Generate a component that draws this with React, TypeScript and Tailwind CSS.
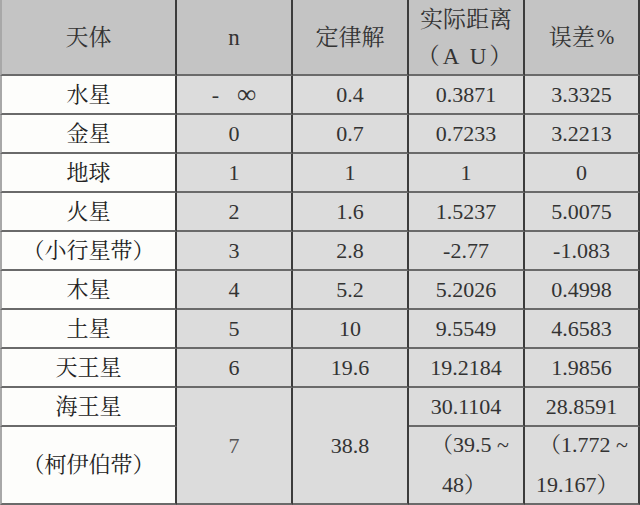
import React from 'react';

type Row = {
  name: string;
  n: React.ReactNode;
  law: string;
  actual: string;
  error: string;
};

const rows: Row[] = [
  {
    name: '水星',
    n: (
      <>
        -<span className="ml-[18px] text-[27px]">∞</span>
      </>
    ),
    law: '0.4',
    actual: '0.3871',
    error: '3.3325',
  },
  { name: '金星', n: '0', law: '0.7', actual: '0.7233', error: '3.2213' },
  { name: '地球', n: '1', law: '1', actual: '1', error: '0' },
  { name: '火星', n: '2', law: '1.6', actual: '1.5237', error: '5.0075' },
  { name: '（小行星带）', n: '3', law: '2.8', actual: '-2.77', error: '-1.083' },
  { name: '木星', n: '4', law: '5.2', actual: '5.2026', error: '0.4998' },
  { name: '土星', n: '5', law: '10', actual: '9.5549', error: '4.6583' },
  { name: '天王星', n: '6', law: '19.6', actual: '19.2184', error: '1.9856' },
];

const font = {
  fontFamily: '"Liberation Serif", "Noto Serif CJK SC", "Noto Sans CJK SC", serif',
};

// cellule de base : bordure droite foncée, bordure basse grise
const cell = 'flex items-center justify-center border-r-2 border-b-2 border-r-[#3c3c3c] border-b-[#6a6a6a]';
const nameCell = `${cell} bg-[#fdfdfb] border-l-2 border-l-[#a8a8a8] text-[#222]`;
const dataCell = `${cell} bg-[#dcdcdc] text-[#333]`;
const headCell = `${cell} bg-[#c4c4c4] text-[#333] text-[23px]`;

export default function App() {
  return (
    <div className="w-[640px] h-[505px] bg-white text-[22px] leading-none" style={font}>
      <div className="grid grid-cols-[177px_116px_116px_116px_115px] grid-rows-[76px_repeat(9,39px)_78px]">
        {/* En-tête */}
        <div className={`${headCell} border-l-2 border-l-[#a8a8a8]`}>天体</div>
        <div className={headCell}>n</div>
        <div className={headCell}>定律解</div>
        <div className={`${headCell} flex-col`}>
          <span className="leading-[37px] mt-[2px]">实际距离</span>
          <span className="leading-[37px] tracking-[3px]">（A U）</span>
        </div>
        <div className={headCell}>
          误差<span className="ml-[2px] text-[21px]">%</span>
        </div>

        {rows.map((r) => (
          <React.Fragment key={r.name}>
            <div className={nameCell}>{r.name}</div>
            <div className={dataCell}>{r.n}</div>
            <div className={dataCell}>{r.law}</div>
            <div className={dataCell}>{r.actual}</div>
            <div className={dataCell}>{r.error}</div>
          </React.Fragment>
        ))}

        {/* Neptune + ceinture de Kuiper */}
        <div className={nameCell}>海王星</div>
        <div className={`${dataCell} row-span-2 text-[#555]`}>7</div>
        <div className={`${dataCell} row-span-2`}>38.8</div>
        <div className={dataCell}>30.1104</div>
        <div className={dataCell}>28.8591</div>

        <div className={nameCell}>（柯伊伯带）</div>
        <div className={`${dataCell} flex-col !items-start`}>
          <span className="leading-[40px] ml-[22px]">（39.5 ~</span>
          <span className="leading-[40px] ml-[33px]">48）</span>
        </div>
        <div className={`${dataCell} flex-col !items-start`}>
          <span className="leading-[40px] ml-[14px]">（1.772 ~</span>
          <span className="leading-[40px] ml-[11px]">19.167）</span>
        </div>
      </div>
    </div>
  );
}
